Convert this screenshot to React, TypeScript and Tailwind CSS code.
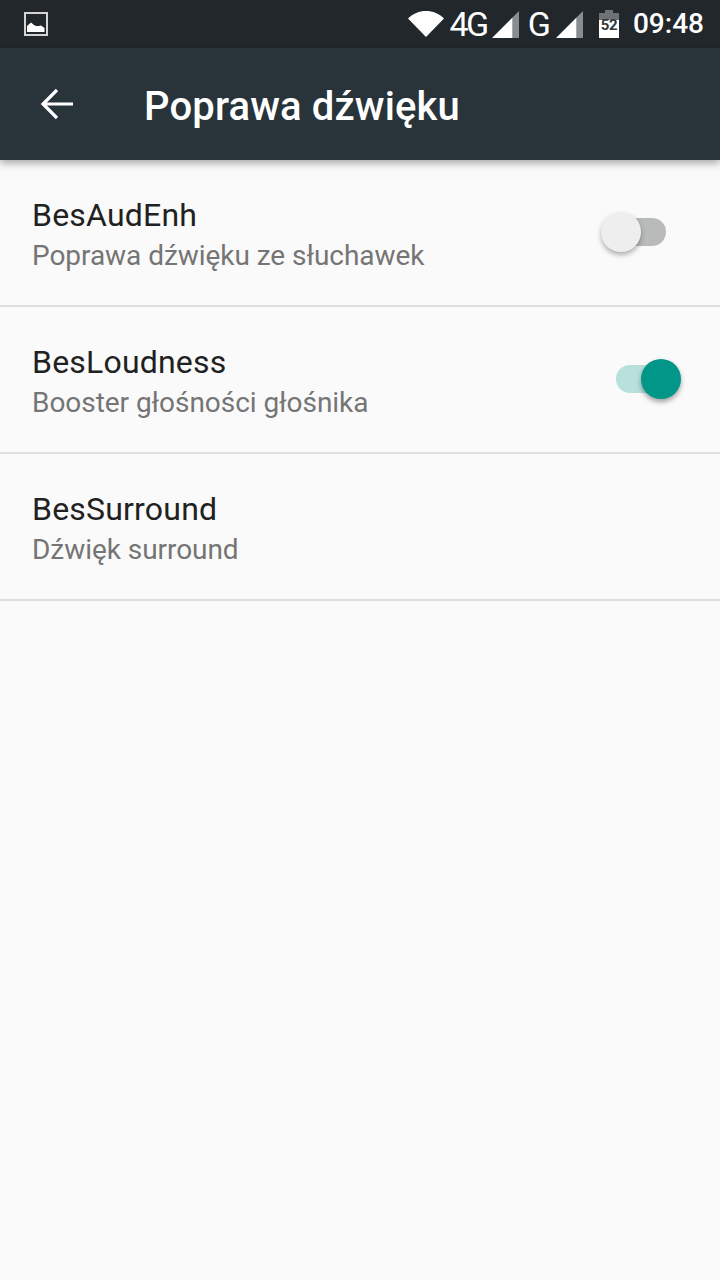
const Signal = () => (
    <svg width="27" height="28" viewBox="0 0 27 28">
        <path d="M27 1V28H20.500V7.500Z" fill="#8a8d8f" />
        <path d="M20.500 7.500V28H0Z" fill="#ffffff" />
    </svg>
)

const Battery = () => (
    <div className="relative w-[20px] h-[28px]">
        <svg width="20" height="28" viewBox="0 0 20 28">
            <path d="M6 0H14V3H20V10H0V3H6Z" fill="#6f7275" />
            <path d="M0 10H20V28H0Z" fill="#ffffff" />
        </svg>
        <span className="absolute inset-x-0 top-[7px] text-center text-[15px] leading-[16px] font-bold text-[#33383b] tracking-[-0.5px]">52</span>
    </div>
)

const Toggle = ({ on }: { on: boolean }) => (
    <div className="relative w-[80px] h-[40px] flex items-center mb-[2px]">
        {on ? (
            <>
                <div className="ml-[15px] w-[50px] h-[28px] rounded-full bg-[#b8e0dc]"></div>
                <div className="absolute left-[40px] top-0 w-[40px] h-[40px] rounded-full bg-[#009688] shadow-[0_3px_5px_rgba(0,0,0,0.35)]"></div>
            </>
        ) : (
            <>
                <div className="ml-[15px] w-[50px] h-[28px] rounded-full bg-[#b9bbba]"></div>
                <div className="absolute left-0 top-0 w-[40px] h-[40px] rounded-full bg-[#eeeeee] shadow-[0_3px_5px_rgba(0,0,0,0.3)]"></div>
            </>
        )}
    </div>
)

const Row = ({ title, sub, toggle }: { title: string; sub: string; toggle?: boolean }) => (
    <div className="h-[147px] flex items-center justify-between pl-[32px] pr-[39px] border-b-2 border-[#dedede]">
        <div className="pt-[6px]">
            <div className="text-[32px] leading-[38px] text-[#212121] tracking-[0.2px]">{title}</div>
            <div className="text-[28px] leading-[38px] text-[#757575] mt-[3px] tracking-[-0.05px]">{sub}</div>
        </div>
        {toggle !== undefined && <Toggle on={toggle} />}
    </div>
)

export default function App() {
    return (
        <div className="w-[720px] h-[1280px] overflow-hidden bg-[#fafafa] font-['Roboto',sans-serif] flex flex-col">
            <div className="h-[48px] shrink-0 bg-[#21272b] flex items-center pl-[24px] pr-[16px] text-white">
                <svg width="24" height="24" viewBox="0 0 24 24">
                    <rect x="1" y="1" width="22" height="22" fill="none" stroke="#d4d4d4" strokeWidth="2" />
                    <path d="M3 20V14L7 10.500L10 13L12 14H15L17 13.500L20.500 16V20Z" fill="#ffffff" />
                </svg>
                <div className="ml-auto flex items-center">
                    <svg width="36" height="28" viewBox="0 0 36 28">
                        <path d="M0 8.500C5 3.500 11 1 18 1S31 3.500 36 8.500L18 27Z" fill="#ffffff" />
                    </svg>
                    <span className="ml-[6px] text-[34px] leading-[48px] tracking-[-2.500px]">4G</span>
                    <div className="ml-[5px]"><Signal /></div>
                    <span className="ml-[9px] text-[34px] leading-[48px]">G</span>
                    <div className="ml-[5px]"><Signal /></div>
                    <div className="ml-[16px]"><Battery /></div>
                    <span className="ml-[14px] text-[28px] leading-[48px] font-medium">09:48</span>
                </div>
            </div>
            <div className="relative h-[112px] shrink-0 bg-[#28333a] flex items-center pl-[40px] shadow-[0_3px_8px_rgba(0,0,0,0.35)]">
                <svg width="34" height="32" viewBox="0 0 34 32" fill="none" stroke="#ffffff" strokeWidth="3.200">
                    <path d="M33 16H3M17 2L3 16L17 30" />
                </svg>
                <span className="ml-[70px] text-[40px] leading-[48px] pt-[6px] font-medium tracking-[0.15px] text-white">Poprawa dźwięku</span>
            </div>
            <Row title="BesAudEnh" sub="Poprawa dźwięku ze słuchawek" toggle={false} />
            <Row title="BesLoudness" sub="Booster głośności głośnika" toggle={true} />
            <Row title="BesSurround" sub="Dźwięk surround" />
        </div>
    )
}
